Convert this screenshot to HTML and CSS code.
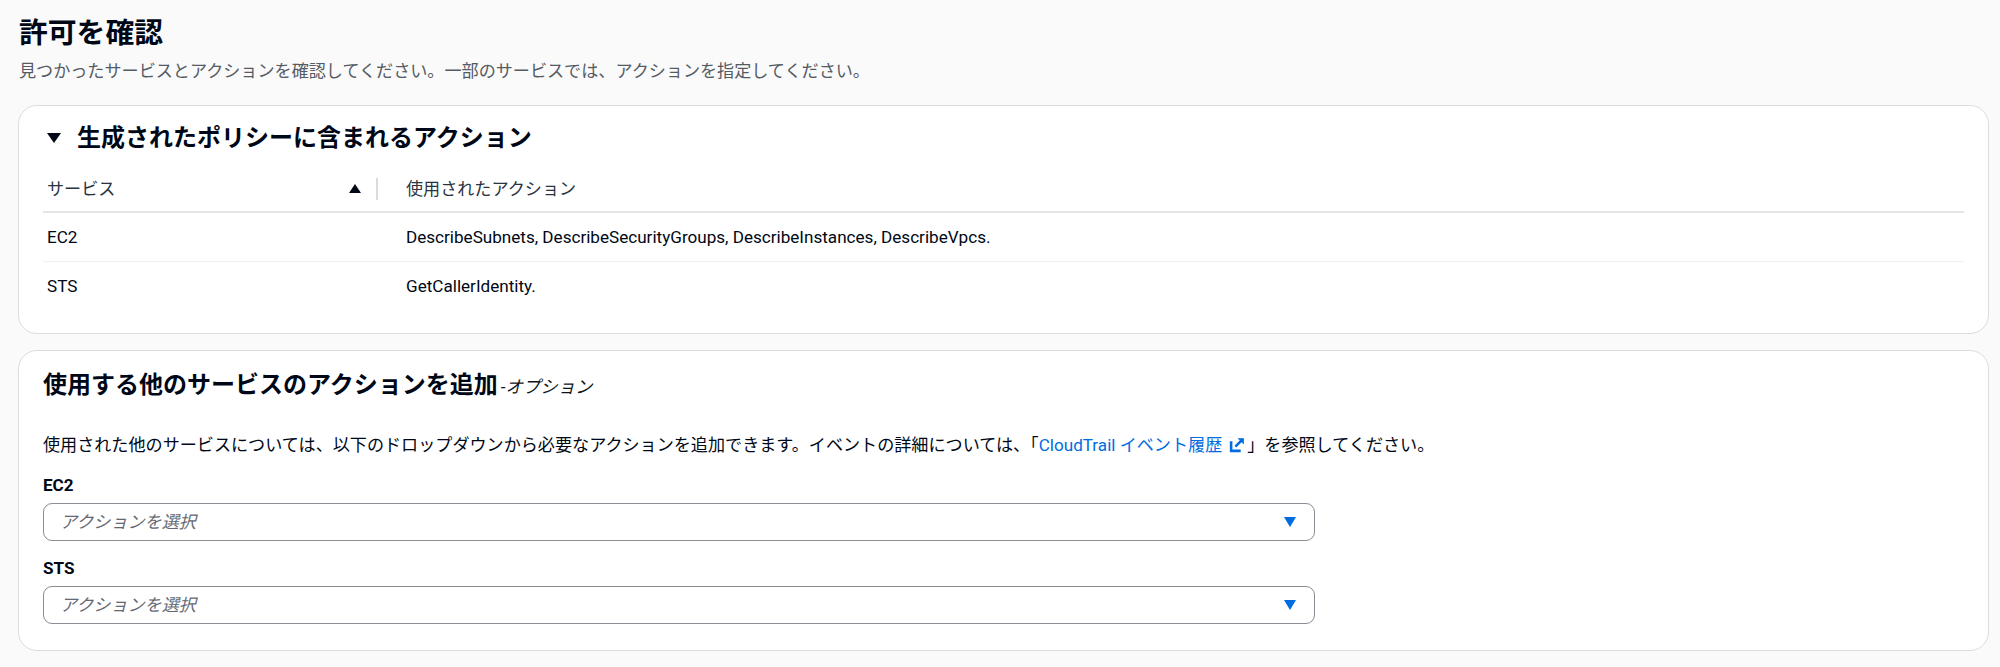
FILE: index.html
```html
<!DOCTYPE html>
<html lang="ja">
<head>
    <meta charset="UTF-8">
    <meta name="viewport" content="width=device-width, initial-scale=1.0">
    <title>許可を確認</title>
    <link rel="stylesheet" href="styles.css">
</head>
<body>

    <div class="page">
        <!-- Encabezado de la página -->
        <h1 class="page-title">許可を確認</h1>
        <p class="page-desc">見つかったサービスとアクションを確認してください。一部のサービスでは、アクションを指定してください。</p>

        <!-- Acciones incluidas en la política -->
        <section class="card">
            <h2 class="card-title">
                <svg class="expand-icon" viewBox="0 0 14 10" width="14" height="10"><path d="M0 0 H14 L7 10 Z" fill="#000716"/></svg>
                生成されたポリシーに含まれるアクション
            </h2>

            <table class="actions-table">
                <colgroup>
                    <col class="col-service">
                    <col>
                </colgroup>
                <thead>
                    <tr>
                        <th>
                            <div class="th-inner">
                                <span>サービス</span>
                                <span class="th-tools">
                                    <svg viewBox="0 0 12 9" width="12" height="9"><path d="M6 0 L12 9 H0 Z" fill="#000716"/></svg>
                                    <span class="th-divider"></span>
                                </span>
                            </div>
                        </th>
                        <th>使用されたアクション</th>
                    </tr>
                </thead>
                <tbody>
                    <tr>
                        <td>EC2</td>
                        <td>DescribeSubnets, DescribeSecurityGroups, DescribeInstances, DescribeVpcs.</td>
                    </tr>
                    <tr>
                        <td>STS</td>
                        <td>GetCallerIdentity.</td>
                    </tr>
                </tbody>
            </table>
        </section>

        <!-- Acciones de otros servicios -->
        <section class="card">
            <h2 class="card-title">使用する他のサービスのアクションを追加<span class="optional">-オプション</span></h2>

            <p class="card-desc">使用された他のサービスについては、以下のドロップダウンから必要なアクションを追加できます。イベントの詳細については、「<a href="#" class="ext-link">CloudTrail イベント履歴<svg viewBox="0 0 16 16" width="17" height="17"><path d="M2 5 V14 H11" fill="none" stroke="currentColor" stroke-width="2.4"/><path d="M6 10 L13 3" fill="none" stroke="currentColor" stroke-width="2.4"/><path d="M8 2 H14 V8 Z" fill="currentColor"/></svg></a>」を参照してください。</p>

            <label class="field-label">EC2</label>
            <div class="select">
                <span class="placeholder">アクションを選択</span>
                <svg viewBox="0 0 12 10" width="12" height="10"><path d="M0 0 H12 L6 10 Z" fill="#006ce0"/></svg>
            </div>

            <label class="field-label">STS</label>
            <div class="select">
                <span class="placeholder">アクションを選択</span>
                <svg viewBox="0 0 12 10" width="12" height="10"><path d="M0 0 H12 L6 10 Z" fill="#006ce0"/></svg>
            </div>
        </section>
    </div>

</body>
</html>
```

FILE: styles.css
```css
body {
    font-family: Roboto, "Noto Sans CJK JP", sans-serif;
    font-size: 17.1px;
    line-height: 24px;
    background-color: #fafafa;
    color: #000716;
    margin: 0;
    padding: 0;
}

.page {
    padding: 15px 11px 16px 18px;
}

.page-title {
    font-size: 28.8px;
    line-height: 36px;
    font-weight: 700;
    margin: 0 0 0 1px;
}

.page-desc {
    margin: 8px 0 22px 1px;
    color: #545b64;
}

.card {
    background-color: #ffffff;
    border: 1px solid #dcdde1;
    border-radius: 19px;
    padding: 17px 24px 23px 24px;
    margin-bottom: 16px;
}

.card-title {
    display: flex;
    align-items: center;
    font-size: 24px;
    line-height: 30px;
    font-weight: 700;
    margin: 0;
}

.expand-icon {
    margin: 0 16px 0 4px;
}

.optional {
    font-size: 17.4px;
    font-weight: 400;
    font-style: italic;
    margin-left: 3px;
    padding-top: 4px;
    color: #0f141a;
}

.actions-table {
    width: 100%;
    margin-top: 13px;
    border-collapse: collapse;
    table-layout: fixed;
}

.col-service {
    width: 335px;
}

.actions-table th {
    height: 45px;
    padding: 0 0 0 4px;
    text-align: left;
    font-weight: 400;
    color: #2a3340;
    border-bottom: 2px solid #e4e5e8;
}

.actions-table th + th {
    padding-left: 28px;
}

.th-inner {
    display: flex;
    justify-content: space-between;
    align-items: center;
}

.th-tools {
    display: flex;
    align-items: center;
    gap: 15px;
}

.th-divider {
    display: block;
    width: 2px;
    height: 22px;
    background-color: #dadbdf;
}

.actions-table td {
    height: 48px;
    padding: 0 0 0 4px;
    border-bottom: 1px solid #eff0f2;
}

.actions-table td + td {
    padding-left: 28px;
}

.actions-table tr:last-child td {
    border-bottom: none;
}

.card-desc {
    margin: 31px 0 16px 0;
}

.ext-link {
    color: #006ce0;
    text-decoration: none;
}

.ext-link svg {
    margin: 0 1px 0 7px;
    vertical-align: -2px;
}

.field-label {
    display: block;
    font-weight: 700;
    margin-bottom: 6px;
}

.select {
    display: flex;
    justify-content: space-between;
    align-items: center;
    width: 1272px;
    height: 38px;
    box-sizing: border-box;
    padding: 0 18px 0 16px;
    border: 1px solid #8c8c94;
    border-radius: 9px;
    margin-bottom: 15px;
}

.select:last-child {
    margin-bottom: 0;
}

.card:last-child {
    padding-bottom: 26px;
}

.placeholder {
    font-style: italic;
    color: #656871;
}
```
